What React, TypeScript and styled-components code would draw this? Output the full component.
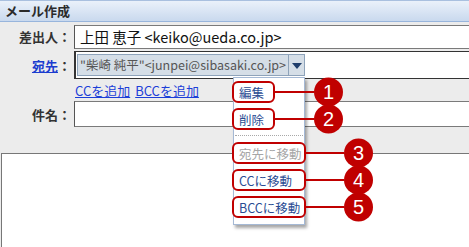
import styled, { createGlobalStyle } from "styled-components";

const GlobalStyle = createGlobalStyle`
  html, body {
    margin: 0;
    padding: 0;
    background: #ffffff;
  }
  body {
    font-family: "Noto Sans CJK JP", "Noto Sans", sans-serif;
  }
`;

const Window = styled.div`
  position: relative;
  width: 469px;
  height: 247px;
  overflow: hidden;
  background: #ececec;
  display: flex;
  flex-direction: column;
`;

const TitleBar = styled.div`
  height: 22px;
  box-sizing: border-box;
  padding-left: 5px;
  border-top: 1px solid #a9c0df;
  border-bottom: 1px solid #98b5dc;
  background: linear-gradient(#eaf1fa, #c9d9ee);
  font-size: 13px;
  font-weight: bold;
  line-height: 20px;
  color: #2b2b2b;
`;

const Form = styled.div`
  display: grid;
  grid-template-columns: 71px 1fr;
  grid-template-rows: 26px 28px 22px 26px;
  column-gap: 3px;
  padding: 3px 0 26px 0;
`;

const Label = styled.div<{ $top?: boolean }>`
  align-self: ${(p) => (p.$top ? "start" : "center")};
  line-height: ${(p) => (p.$top ? "24px" : "normal")};
  text-align: right;
  font-size: 13px;
  font-weight: bold;
  color: #333333;
  white-space: nowrap;
`;

const LabelLink = styled.a`
  color: #1b3ccf;
  text-decoration: underline;
  cursor: pointer;
`;

const TextField = styled.div<{ $height: number }>`
  height: ${(p) => p.$height}px;
  box-sizing: border-box;
  align-self: start;
  background: #ffffff;
  border: 1px solid #7a7a7a;
  border-right: none;
  border-left-color: #555555;
  padding-left: 5px;
  font-size: 14.5px;
  line-height: 22px;
  color: #111111;
  white-space: nowrap;
`;

const AddressBox = styled.div`
  height: 28px;
  box-sizing: border-box;
  background: #ffffff;
  border: 1px solid #333333;
  border-left-width: 2px;
  border-right: none;
  padding: 2px 1px;
  display: flex;
`;

const Chip = styled.div`
  display: flex;
  width: 228px;
  height: 22px;
  box-sizing: border-box;
  border: 1px solid #8ea3ba;
  background: #d5dee7;
`;

const ChipText = styled.span`
  flex: 1;
  padding-left: 2px;
  font-size: 12.5px;
  line-height: 20px;
  color: #555555;
  white-space: nowrap;
  overflow: hidden;
`;

const ChipArrow = styled.span`
  width: 15px;
  border-left: 1px solid #8ea3ba;
  display: flex;
  align-items: center;
  justify-content: center;

  &::after {
    content: "";
    border-top: 6px solid #1e3d6b;
    border-left: 5px solid transparent;
    border-right: 5px solid transparent;
    margin-top: 2px;
  }
`;

const LinkRow = styled.div`
  display: flex;
  align-items: center;
  gap: 5px;
  padding-left: 1px;
  font-size: 13px;
`;

const TextLink = styled.a`
  color: #1c3fd8;
  text-decoration: underline;
  cursor: pointer;
`;

const Body = styled.div`
  flex: 1;
  margin-left: 1px;
  background: #ffffff;
  border-top: 1px solid #777777;
  border-left: 1px solid #777777;
`;

const Menu = styled.div`
  position: absolute;
  left: 233px;
  top: 77px;
  width: 72px;
  box-sizing: border-box;
  padding: 3px 0 6px 0;
  background: #ffffff;
  border: 1px solid #a5b9d5;
  box-shadow: 2px 3px 3px rgba(0, 0, 0, 0.35);
  display: flex;
  flex-direction: column;
  gap: 5px;
`;

const Separator = styled.div`
  margin: 0 1px 1px 1px;
  border-top: 1px dotted #a8a8a8;
`;

const MenuItem = styled.div<{ $width: number; $disabled?: boolean }>`
  position: relative;
  margin-left: -2px;
  width: ${(p) => p.$width}px;
  height: 22px;
  box-sizing: border-box;
  border: 2px solid #c00000;
  border-radius: 6px;
  padding-left: 5px;
  display: flex;
  align-items: center;
  font-size: 12.5px;
  color: ${(p) => (p.$disabled ? "#a6a6a6" : "#2a4c93")};
  white-space: nowrap;
`;

const Connector = styled.span<{ $reach: number }>`
  position: absolute;
  left: calc(100% + 2px);
  top: 50%;
  margin-top: -1px;
  width: ${(p) => p.$reach}px;
  height: 2px;
  background: #c00000;
`;

const Badge = styled.span<{ $reach: number }>`
  position: absolute;
  left: calc(100% + 2px + ${(p) => p.$reach}px);
  top: 50%;
  transform: translateY(-50%);
  width: 29px;
  height: 29px;
  border-radius: 50%;
  background: #c00000;
  color: #ffffff;
  font-family: "Liberation Sans", Arial, sans-serif;
  font-size: 20px;
  line-height: 29px;
  text-align: center;
`;

type Item = {
  label: string;
  no: number;
  width: number;
  reach: number;
  disabled?: boolean;
};

const topItems: Item[] = [
  { label: "編集", no: 1, width: 43, reach: 39 },
  { label: "削除", no: 2, width: 43, reach: 39 },
];

const moveItems: Item[] = [
  { label: "宛先に移動", no: 3, width: 74, reach: 38, disabled: true },
  { label: "CCに移動", no: 4, width: 74, reach: 38 },
  { label: "BCCに移動", no: 5, width: 74, reach: 38 },
];

const renderItem = (item: Item) => (
  <MenuItem key={item.no} $width={item.width} $disabled={item.disabled}>
    {item.label}
    <Connector $reach={item.reach} />
    <Badge $reach={item.reach}>{item.no}</Badge>
  </MenuItem>
);

const App = () => {
  return (
    <Window>
      <GlobalStyle />
      <TitleBar>メール作成</TitleBar>
      <Form>
        <Label $top>差出人：</Label>
        <TextField $height={24}>上田 恵子 &lt;keiko@ueda.co.jp&gt;</TextField>

        <Label>
          <LabelLink>宛先</LabelLink>：
        </Label>
        <AddressBox>
          <Chip>
            <ChipText>"柴崎 純平"&lt;junpei@sibasaki.co.jp&gt;</ChipText>
            <ChipArrow />
          </Chip>
        </AddressBox>

        <span />
        <LinkRow>
          <TextLink>CCを追加</TextLink>
          <TextLink>BCCを追加</TextLink>
        </LinkRow>

        <Label>件名：</Label>
        <TextField $height={26} />
      </Form>
      <Body />

      <Menu>
        {topItems.map(renderItem)}
        <Separator />
        {moveItems.map(renderItem)}
      </Menu>
    </Window>
  );
};

export default App;
